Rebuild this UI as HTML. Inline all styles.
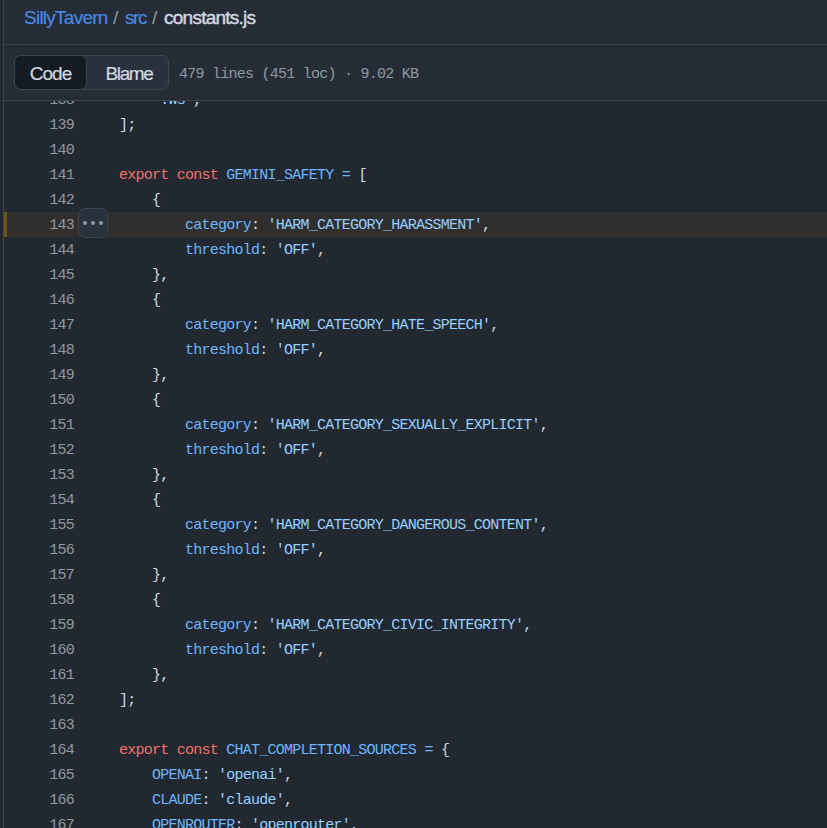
<!DOCTYPE html>
<html><head><meta charset="utf-8">
<style>
*{box-sizing:border-box}
html,body{margin:0;padding:0;width:827px;height:828px;overflow:hidden;background:#212830}
body{position:relative;font-family:"Liberation Sans",sans-serif}
#frame{position:absolute;left:3px;top:0;width:824px;height:828px;border-left:1px solid #3d444d;background:#212830;overflow:hidden}
#crumb{position:absolute;left:0;top:0;width:100%;height:45px;background:#262c36;border-bottom:1px solid #3d444d}
#crumb .w{position:absolute;top:7px;font-size:19px;line-height:22px;white-space:pre}
.blue{color:#478be6;-webkit-text-stroke:0.15px #478be6}
.sep{color:#9198a1}
.fn{color:#d1d7e0;-webkit-text-stroke:0.45px #d1d7e0}
#bar{position:absolute;left:0;top:45px;width:100%;height:56px;background:#262c36;border-bottom:1px solid #3d444d}
#seg{position:absolute;left:10px;top:10px;width:155px;height:35px;border:1px solid #3d444d;border-radius:7px;background:#2a313c}
#seg .code{position:absolute;left:-1px;top:-1px;width:73px;height:35px;background:#151b23;border-radius:7px;border:1px solid #3d444d;color:#d1d7e0;font-size:19px;line-height:35px;text-align:center;letter-spacing:-1px;-webkit-text-stroke:0.2px #d1d7e0}
#seg .blame{position:absolute;left:74px;top:0;width:80px;height:33px;color:#d1d7e0;font-size:19px;line-height:35px;text-align:center;letter-spacing:-1.35px;-webkit-text-stroke:0.2px #d1d7e0}
#info{position:absolute;left:175px;top:20px;font-family:"Liberation Mono",monospace;font-size:15px;letter-spacing:-0.75px;color:#9198a1;white-space:nowrap;line-height:20px}
#code{position:absolute;left:0;top:100px;width:100%;height:728px;overflow:hidden}
#lines{position:absolute;left:0;top:-13px;width:100%}
.ln{position:relative;height:25px;font-family:"Liberation Mono",monospace;font-size:15px;line-height:25px;white-space:pre;color:#d1d7e0}
.ln .n{position:absolute;top:1px;left:0;width:70px;text-align:right;color:#9198a1;letter-spacing:-0.75px}
.ln .c{position:absolute;top:1px;left:115px;letter-spacing:-0.75px}
.ln.hl{background:#302f2e}
.ln.hl::before{content:"";position:absolute;left:0;top:0;width:3px;height:25px;background:#6e5415}
.k{color:#f47067}
.v{color:#6cb6ff}
.s{color:#96d0ff}
#dots{position:absolute;left:74px;top:108px;width:30px;height:30px;border:1px solid #3d444d;border-radius:7px;background:#2a313c}
#dots i{position:absolute;top:12px;width:4px;height:4px;border-radius:50%;background:#9198a1}
</style></head><body>
<div id="frame">
<div id="crumb"><span class="w blue" style="left:20px;letter-spacing:-0.75px">SillyTavern</span><span class="w sep" style="left:109px">/</span><span class="w blue" style="left:121px;letter-spacing:-1.4px">src</span><span class="w sep" style="left:148px">/</span><span class="w fn" style="left:160px;letter-spacing:-0.75px">constants.js</span></div>
<div id="code"><div id="lines">
<div class="ln"><span class="n">138</span><span class="c">    <span class="s">'.ws'</span>,</span></div>
<div class="ln"><span class="n">139</span><span class="c">];</span></div>
<div class="ln"><span class="n">140</span><span class="c"></span></div>
<div class="ln"><span class="n">141</span><span class="c"><span class="k">export</span> <span class="k">const</span> <span class="v">GEMINI_SAFETY</span> <span class="v">=</span> [</span></div>
<div class="ln"><span class="n">142</span><span class="c">    {</span></div>
<div class="ln hl"><span class="n">143</span><span class="c">        <span class="v">category</span>: <span class="s">'HARM_CATEGORY_HARASSMENT'</span>,</span></div>
<div class="ln"><span class="n">144</span><span class="c">        <span class="v">threshold</span>: <span class="s">'OFF'</span>,</span></div>
<div class="ln"><span class="n">145</span><span class="c">    },</span></div>
<div class="ln"><span class="n">146</span><span class="c">    {</span></div>
<div class="ln"><span class="n">147</span><span class="c">        <span class="v">category</span>: <span class="s">'HARM_CATEGORY_HATE_SPEECH'</span>,</span></div>
<div class="ln"><span class="n">148</span><span class="c">        <span class="v">threshold</span>: <span class="s">'OFF'</span>,</span></div>
<div class="ln"><span class="n">149</span><span class="c">    },</span></div>
<div class="ln"><span class="n">150</span><span class="c">    {</span></div>
<div class="ln"><span class="n">151</span><span class="c">        <span class="v">category</span>: <span class="s">'HARM_CATEGORY_SEXUALLY_EXPLICIT'</span>,</span></div>
<div class="ln"><span class="n">152</span><span class="c">        <span class="v">threshold</span>: <span class="s">'OFF'</span>,</span></div>
<div class="ln"><span class="n">153</span><span class="c">    },</span></div>
<div class="ln"><span class="n">154</span><span class="c">    {</span></div>
<div class="ln"><span class="n">155</span><span class="c">        <span class="v">category</span>: <span class="s">'HARM_CATEGORY_DANGEROUS_CONTENT'</span>,</span></div>
<div class="ln"><span class="n">156</span><span class="c">        <span class="v">threshold</span>: <span class="s">'OFF'</span>,</span></div>
<div class="ln"><span class="n">157</span><span class="c">    },</span></div>
<div class="ln"><span class="n">158</span><span class="c">    {</span></div>
<div class="ln"><span class="n">159</span><span class="c">        <span class="v">category</span>: <span class="s">'HARM_CATEGORY_CIVIC_INTEGRITY'</span>,</span></div>
<div class="ln"><span class="n">160</span><span class="c">        <span class="v">threshold</span>: <span class="s">'OFF'</span>,</span></div>
<div class="ln"><span class="n">161</span><span class="c">    },</span></div>
<div class="ln"><span class="n">162</span><span class="c">];</span></div>
<div class="ln"><span class="n">163</span><span class="c"></span></div>
<div class="ln"><span class="n">164</span><span class="c"><span class="k">export</span> <span class="k">const</span> <span class="v">CHAT_COMPLETION_SOURCES</span> <span class="v">=</span> {</span></div>
<div class="ln"><span class="n">165</span><span class="c">    <span class="v">OPENAI</span>: <span class="s">'openai'</span>,</span></div>
<div class="ln"><span class="n">166</span><span class="c">    <span class="v">CLAUDE</span>: <span class="s">'claude'</span>,</span></div>
<div class="ln"><span class="n">167</span><span class="c">    <span class="v">OPENROUTER</span>: <span class="s">'openrouter'</span>,</span></div>
</div>
<div id="dots"><i style="left:4px"></i><i style="left:12px"></i><i style="left:20px"></i></div>
</div>
<div id="bar">
<div id="seg"><div class="code">Code</div><div class="blame">Blame</div></div>
<div id="info">479 lines (451 loc) · 9.02 KB</div>
</div>
</div>
</body></html>
